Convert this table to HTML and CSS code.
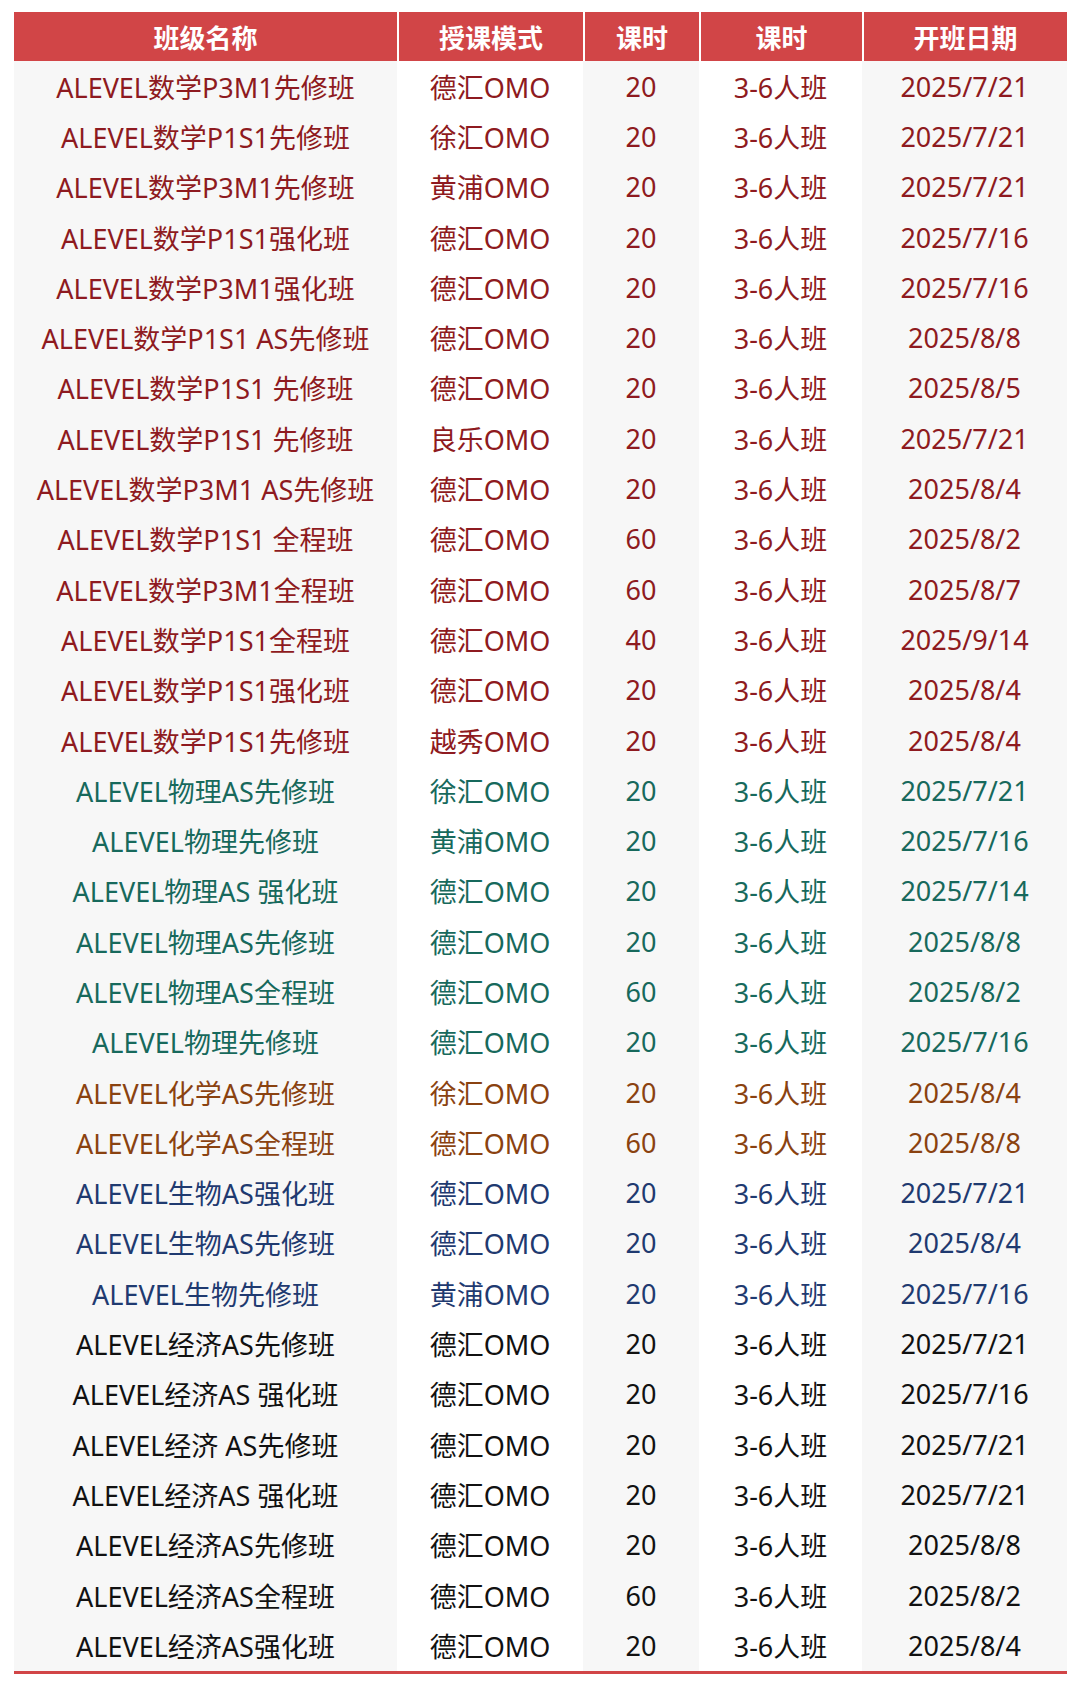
FILE: index.html
```html
<!DOCTYPE html>
<html lang="zh-CN">
<head>
<meta charset="utf-8">
<title>ALEVEL 课程表</title>
<link rel="stylesheet" href="styles.css">
</head>
<body>
<div class="wrap">
<table class="schedule">
<colgroup>
<col class="c-name"><col class="c-mode"><col class="c-hours"><col class="c-size"><col class="c-date">
</colgroup>
<thead>
<tr><th>班级名称</th><th>授课模式</th><th>课时</th><th>课时</th><th>开班日期</th></tr>
</thead>
<tbody>
<tr class="math"><td>ALEVEL数学P3M1先修班</td><td>德汇OMO</td><td>20</td><td>3-6人班</td><td>2025/7/21</td></tr>
<tr class="math"><td>ALEVEL数学P1S1先修班</td><td>徐汇OMO</td><td>20</td><td>3-6人班</td><td>2025/7/21</td></tr>
<tr class="math"><td>ALEVEL数学P3M1先修班</td><td>黄浦OMO</td><td>20</td><td>3-6人班</td><td>2025/7/21</td></tr>
<tr class="math"><td>ALEVEL数学P1S1强化班</td><td>德汇OMO</td><td>20</td><td>3-6人班</td><td>2025/7/16</td></tr>
<tr class="math"><td>ALEVEL数学P3M1强化班</td><td>德汇OMO</td><td>20</td><td>3-6人班</td><td>2025/7/16</td></tr>
<tr class="math"><td>ALEVEL数学P1S1 AS先修班</td><td>德汇OMO</td><td>20</td><td>3-6人班</td><td>2025/8/8</td></tr>
<tr class="math"><td>ALEVEL数学P1S1 先修班</td><td>德汇OMO</td><td>20</td><td>3-6人班</td><td>2025/8/5</td></tr>
<tr class="math"><td>ALEVEL数学P1S1 先修班</td><td>良乐OMO</td><td>20</td><td>3-6人班</td><td>2025/7/21</td></tr>
<tr class="math"><td>ALEVEL数学P3M1 AS先修班</td><td>德汇OMO</td><td>20</td><td>3-6人班</td><td>2025/8/4</td></tr>
<tr class="math"><td>ALEVEL数学P1S1 全程班</td><td>德汇OMO</td><td>60</td><td>3-6人班</td><td>2025/8/2</td></tr>
<tr class="math"><td>ALEVEL数学P3M1全程班</td><td>德汇OMO</td><td>60</td><td>3-6人班</td><td>2025/8/7</td></tr>
<tr class="math"><td>ALEVEL数学P1S1全程班</td><td>德汇OMO</td><td>40</td><td>3-6人班</td><td>2025/9/14</td></tr>
<tr class="math"><td>ALEVEL数学P1S1强化班</td><td>德汇OMO</td><td>20</td><td>3-6人班</td><td>2025/8/4</td></tr>
<tr class="math"><td>ALEVEL数学P1S1先修班</td><td>越秀OMO</td><td>20</td><td>3-6人班</td><td>2025/8/4</td></tr>
<tr class="phys"><td>ALEVEL物理AS先修班</td><td>徐汇OMO</td><td>20</td><td>3-6人班</td><td>2025/7/21</td></tr>
<tr class="phys"><td>ALEVEL物理先修班</td><td>黄浦OMO</td><td>20</td><td>3-6人班</td><td>2025/7/16</td></tr>
<tr class="phys"><td>ALEVEL物理AS 强化班</td><td>德汇OMO</td><td>20</td><td>3-6人班</td><td>2025/7/14</td></tr>
<tr class="phys"><td>ALEVEL物理AS先修班</td><td>德汇OMO</td><td>20</td><td>3-6人班</td><td>2025/8/8</td></tr>
<tr class="phys"><td>ALEVEL物理AS全程班</td><td>德汇OMO</td><td>60</td><td>3-6人班</td><td>2025/8/2</td></tr>
<tr class="phys"><td>ALEVEL物理先修班</td><td>德汇OMO</td><td>20</td><td>3-6人班</td><td>2025/7/16</td></tr>
<tr class="chem"><td>ALEVEL化学AS先修班</td><td>徐汇OMO</td><td>20</td><td>3-6人班</td><td>2025/8/4</td></tr>
<tr class="chem"><td>ALEVEL化学AS全程班</td><td>德汇OMO</td><td>60</td><td>3-6人班</td><td>2025/8/8</td></tr>
<tr class="bio"><td>ALEVEL生物AS强化班</td><td>德汇OMO</td><td>20</td><td>3-6人班</td><td>2025/7/21</td></tr>
<tr class="bio"><td>ALEVEL生物AS先修班</td><td>德汇OMO</td><td>20</td><td>3-6人班</td><td>2025/8/4</td></tr>
<tr class="bio"><td>ALEVEL生物先修班</td><td>黄浦OMO</td><td>20</td><td>3-6人班</td><td>2025/7/16</td></tr>
<tr class="econ"><td>ALEVEL经济AS先修班</td><td>德汇OMO</td><td>20</td><td>3-6人班</td><td>2025/7/21</td></tr>
<tr class="econ"><td>ALEVEL经济AS 强化班</td><td>德汇OMO</td><td>20</td><td>3-6人班</td><td>2025/7/16</td></tr>
<tr class="econ"><td>ALEVEL经济 AS先修班</td><td>德汇OMO</td><td>20</td><td>3-6人班</td><td>2025/7/21</td></tr>
<tr class="econ"><td>ALEVEL经济AS 强化班</td><td>德汇OMO</td><td>20</td><td>3-6人班</td><td>2025/7/21</td></tr>
<tr class="econ"><td>ALEVEL经济AS先修班</td><td>德汇OMO</td><td>20</td><td>3-6人班</td><td>2025/8/8</td></tr>
<tr class="econ"><td>ALEVEL经济AS全程班</td><td>德汇OMO</td><td>60</td><td>3-6人班</td><td>2025/8/2</td></tr>
<tr class="econ"><td>ALEVEL经济AS强化班</td><td>德汇OMO</td><td>20</td><td>3-6人班</td><td>2025/8/4</td></tr>
</tbody>
</table>
</div>
</body>
</html>
```

FILE: styles.css
```css
html, body {
  margin: 0;
  padding: 0;
  background: #ffffff;
}

.wrap {
  padding: 12px 13px 0 14px;
}

.schedule {
  width: 1053px;
  table-layout: fixed;
  border-collapse: separate;
  border-spacing: 0;
  font-family: "Noto Sans", "Noto Sans CJK SC", sans-serif;
}

.c-name { width: 383px; }
.c-mode { width: 186px; }
.c-hours { width: 116px; }
.c-size { width: 163px; }
.c-date { width: 205px; }

.schedule th {
  height: 49px;
  padding: 0;
  background: #d14547;
  color: #ffffff;
  font-size: 26px;
  font-weight: 700;
  text-align: center;
  vertical-align: middle;
  border-left: 2px solid #ffffff;
  box-sizing: border-box;
}

.schedule th:first-child {
  border-left: none;
}

.schedule td {
  height: 50.3px;
  padding: 0;
  font-size: 27px;
  text-align: center;
  vertical-align: middle;
  white-space: pre;
  background: #ffffff;
}

.schedule td:nth-child(odd) {
  background: #f7f7f7;
}

.schedule tbody tr:last-child td {
  border-bottom: 3px solid #d14547;
}

.math td { color: #8e1a20; }
.phys td { color: #17695c; }
.chem td { color: #8a4210; }
.bio td { color: #1f3a70; }
.econ td { color: #111111; }
```
